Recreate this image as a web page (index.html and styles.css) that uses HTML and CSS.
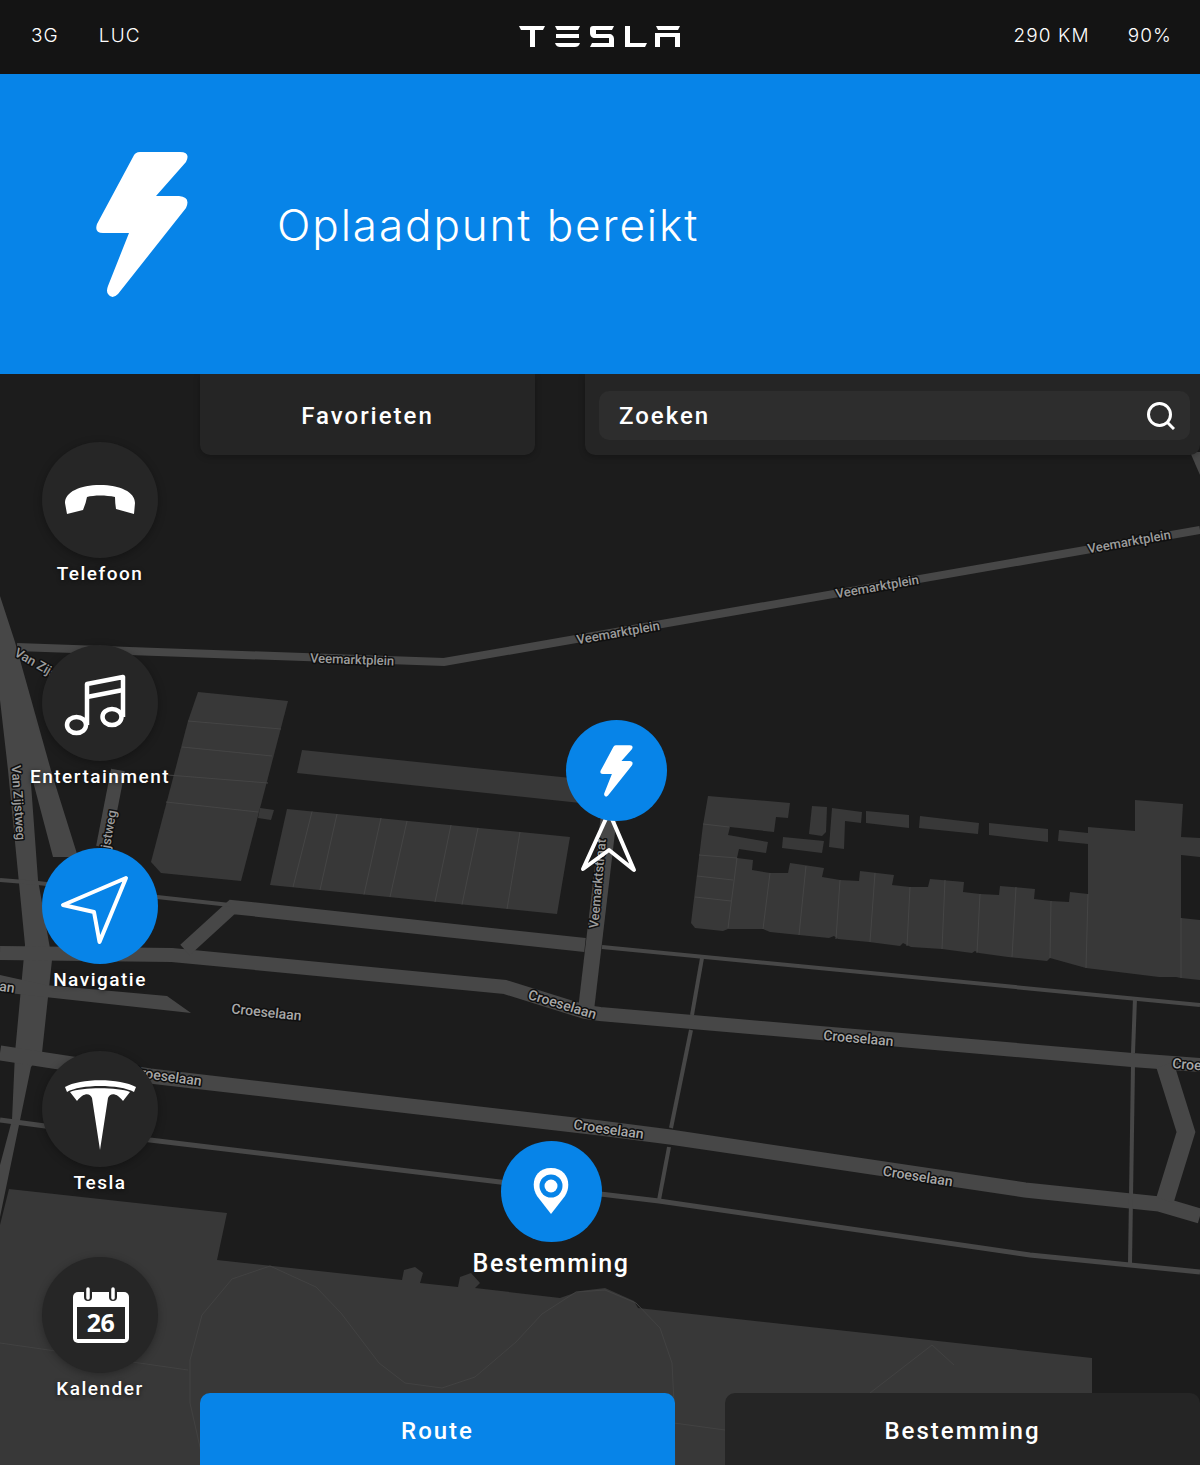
FILE: index.html
```html
<!DOCTYPE html>
<html lang="nl">
<head>
<meta charset="utf-8">
<title>Tesla navigatie</title>
<link rel="stylesheet" href="styles.css">
</head>
<body>
<svg class="defs" width="0" height="0" aria-hidden="true">
  <symbol id="bolt" viewBox="96 151 92 147">
    <path d="M140 152H180Q191 152 186 162L156 196H179Q191 197 186 208L118 294Q112 300 108 294Q106 291 108 286L129 233H103Q94 233 97 224L133 157Q135 152 140 152Z"/>
  </symbol>
</svg>
<div class="screen">
  <header class="topbar">
    <div class="status">
      <span>3G</span>
      <span>LUC</span>
    </div>
    <svg class="logo" viewBox="519 26 161 21" aria-label="Tesla">
      <path d="M519 26H545L543 30H535V47H530V30H521Z"/>
      <path d="M555 26H580L578 30H557ZM556 34H579V38H556ZM555 43H580C579 46 577 47 575 47H560C558 47 556 46 555 43Z"/>
      <path d="M593 26H614L612 30H596V34H609C612 34 614 36 614 39V47H590L592 43H609V38H595C592 38 590 36 590 33V29C590 27 591 26 593 26Z"/>
      <path d="M625 26H630V43H647L645 47H625Z"/>
      <path d="M656 26H680L678 30H658ZM655 33H680V47H675V37H660V47H655Z"/>
    </svg>
    <div class="status status-right">
      <span>290 KM</span>
      <span>90%</span>
    </div>
  </header>

  <section class="banner">
    <svg class="banner-bolt"><use href="#bolt"/></svg>
    <h1 class="banner-title">Oplaadpunt bereikt</h1>
  </section>

  <main class="map-area">
    <svg class="map" viewBox="0 374 1200 1091" preserveAspectRatio="none">
      <!-- park -->
      <path class="block" d="M9 1189L227 1213L217 1260L402 1280L404 1270L415 1267L423 1273L420 1283L458 1287L460 1277L471 1273L480 1283L475 1288L560 1298L580 1291L605 1288L634 1301L638 1308L1092 1358V1465H0V1225Z"/>
      <g class="park-line">
        <polyline points="203,1465 200,1447 190,1403 190,1360 202,1315 232,1279 270,1266 316,1287 341,1313 379,1363 405,1383 442,1388 475,1377 516,1342 542,1314 576,1292 605,1290 636,1303 660,1328 672,1363 674,1403 675,1465"/>
        <polyline points="0,1343 188,1370"/>
        <polyline points="674,1423 725,1430"/>
        <polyline points="870,1393 932,1345 954,1365"/>
      </g>
      <!-- roads -->
      <g class="road">
        <polygon class="road-fill" points="-2,590 15,642 52,774 78,857 53,857 30,770 38,880 52,960 42,1053 31,1067 0,1217 0,1165 12,1120 15,1053 25,945 8,770 0,700"/>
        <polygon class="road-fill" points="0,975 45,985 167,996 191,1013 45,997 0,992"/>
        <polygon class="road-fill" points="1190,452 1200,452 1200,475"/>
        <polyline class="w14" points="0,953 172,955 505,987 585,1012 600,1014 1132,1060 1200,1065"/>
        <polyline class="w15" points="0,1053 150,1076 600,1128 670,1137 1025,1190 1159,1204 1200,1216"/>
        <polyline class="w14" points="185,950 232,907 585,945"/>
        <polyline class="w16" points="609,815 586,1010"/>
        <polyline class="w14" points="118,770 103,847"/>
        <polyline class="w18" points="1165,1065 1186,1132 1165,1200"/>
        <polyline class="w8" points="17,647 444,662 1200,530"/>
        <polyline class="w4" points="0,880 38,883 157,897 230,905"/>
        <polyline class="w5" points="0,1120 150,1140 500,1182 659,1201 1030,1255 1200,1272"/>
        <polyline class="w4" points="602,947 1200,1005"/>
        <polyline class="w4" points="702,958 692,1015"/>
        <polyline class="w4" points="691,1030 671,1128"/>
        <polyline class="w4" points="669,1147 659,1200"/>
        <polyline class="w4" points="1135,998 1133,1053"/>
        <polyline class="w4" points="1133,1065 1130,1263"/>
      </g>
      <!-- buildings -->
      <path class="block" d="M198 692L288 701L241 881L161 873L151 862L188 721Z"/>
      <path class="block" d="M302 750L590 780V804L297 773Z"/>
      <path class="block" d="M260 808L274 810L271 820L258 818Z"/>
      <path class="block" d="M287 809L570 837L557 914L270 885Z"/>
      <path class="block" d="M708 796L790 803L788 818L776 817L774 832L730 827L728 835L768 842L766 853L739 849L737 858L753 860L752 870L770 873L788 873L790 863L824 868L822 877L840 880L859 881L860 871L894 875L892 885L910 887L928 887L930 879L964 882L963 892L980 894L999 895L1000 886L1035 889L1034 899L1051 901L1069 902L1070 892L1088 894V827L1135 831V800L1183 804L1181 837L1200 838V857L1181 855V918L1200 920V980L1181 978L1176 977H1159L1086 968L1050 958L1047 961L1008 957L979 953L975 951L972 953L942 949L911 947L903 943L900 946L869 942L838 939L834 936L829 938L799 935L770 932L763 929H728L723 931L695 928L691 923L703 825Z"/>
      <path class="block" d="M812 806L827 807L826 832L822 836L809 834Z"/>
      <path class="block" d="M832 808L862 812L861 823L845 821L844 849L829 847Z"/>
      <path class="block" d="M866 811L909 815V828L866 823Z"/>
      <path class="block" d="M920 816L979 823L978 834L919 828Z"/>
      <path class="block" d="M989 823L1048 829V842L989 835Z"/>
      <path class="block" d="M1059 830L1088 833V844L1058 841Z"/>
      <path class="block" d="M783 837L824 841L822 853L782 848Z"/>
      <g class="divider">
        <line x1="188" y1="721" x2="281" y2="729"/><line x1="182" y1="747" x2="272" y2="756"/>
        <line x1="168" y1="775" x2="268" y2="783"/><line x1="166" y1="802" x2="258" y2="812"/>
        <line x1="312" y1="811.5" x2="293" y2="887"/><line x1="337" y1="814" x2="320" y2="890"/>
        <line x1="381" y1="818" x2="364" y2="894.5"/><line x1="407" y1="821" x2="390" y2="897"/>
        <line x1="451" y1="825" x2="435" y2="902"/><line x1="478" y1="828" x2="462" y2="904.5"/>
        <line x1="520" y1="832" x2="507" y2="909"/>
        <line x1="728" y1="928" x2="737" y2="858"/><line x1="763" y1="929" x2="770" y2="873"/>
        <line x1="799" y1="935" x2="806" y2="866"/><line x1="836" y1="939" x2="840" y2="880"/>
        <line x1="870" y1="942" x2="875" y2="873"/><line x1="907" y1="946" x2="910" y2="887"/>
        <line x1="942" y1="949" x2="945" y2="880"/><line x1="977" y1="953" x2="980" y2="894"/>
        <line x1="1012" y1="957" x2="1016" y2="887"/><line x1="1050" y1="958" x2="1051" y2="901"/>
        <line x1="1086" y1="968" x2="1088" y2="894"/><line x1="1181" y1="918" x2="1181" y2="978"/>
        <line x1="703" y1="824" x2="729" y2="827"/><line x1="699" y1="855" x2="737" y2="858"/>
        <line x1="697" y1="876" x2="733" y2="880"/><line x1="695" y1="897" x2="731" y2="901"/>
      </g>
      <!-- street labels -->
      <g class="street">
        <text transform="translate(352 664) rotate(2)">Veemarktplein</text>
        <text transform="translate(619 637) rotate(-10)">Veemarktplein</text>
        <text transform="translate(878 591) rotate(-10)">Veemarktplein</text>
        <text transform="translate(1130 546) rotate(-10)">Veemarktplein</text>
        <text transform="translate(46 674) rotate(30)">Van Zijstweg</text>
        <text transform="translate(14 803) rotate(86)">Van Zijstweg</text>
        <text transform="translate(110 848) rotate(-80)">Van Zijstweg</text>
        <text transform="translate(602 884) rotate(-85)">Veemarktstraat</text>
        <text class="street-large" transform="translate(-21 988) rotate(8)">Croeselaan</text>
        <text class="street-large" transform="translate(266 1017) rotate(6)">Croeselaan</text>
        <text class="street-large" transform="translate(561 1009) rotate(17)">Croeselaan</text>
        <text class="street-large" transform="translate(858 1043) rotate(5)">Croeselaan</text>
        <text class="street-large" transform="translate(166 1081) rotate(8)">Croeselaan</text>
        <text class="street-large" transform="translate(608 1134) rotate(8)">Croeselaan</text>
        <text class="street-large" transform="translate(917 1181) rotate(9)">Croeselaan</text>
        <text class="street-large" transform="translate(1207 1071) rotate(5)">Croeselaan</text>
      </g>
      <!-- position arrow -->
      <path class="arrow" d="M609 812L634 870L609 850L583 869Z"/>
    </svg>

    <div class="tabs tabs-top">
      <div class="tab tab-favorites">Favorieten</div>
      <div class="tab tab-search">
        <div class="search-field">
          <span>Zoeken</span>
          <svg class="search-icon" viewBox="0 0 28 28"><circle cx="12.5" cy="12.5" r="11"/><line x1="20.5" y1="20.5" x2="27" y2="27"/></svg>
        </div>
      </div>
    </div>

    <nav class="apps">
      <div class="app">
        <div class="app-circle">
          <svg class="app-icon" viewBox="0 0 116 116"><path class="solid" d="M23 61C23 50 38 43 58 43C78 43 93 50 93 61L92 72L74 67Q73 61 73 55C64 53 52 53 45 55Q44 61 41 68L25 72Z"/></svg>
        </div>
        <span class="app-label">Telefoon</span>
      </div>
      <div class="app">
        <div class="app-circle">
          <svg class="app-icon" viewBox="0 0 116 116"><g class="line line-music"><ellipse cx="34.500" cy="80" rx="9.500" ry="8"/><ellipse cx="70" cy="72" rx="9.500" ry="8"/><path d="M45 80V39L81 32V72"/><path d="M45 52L81 45"/></g></svg>
        </div>
        <span class="app-label">Entertainment</span>
      </div>
      <div class="app">
        <div class="app-circle app-circle-active">
          <svg class="app-icon" viewBox="0 0 116 116"><path class="line" d="M84 30L21 57L52 64L57.500 94Z"/></svg>
        </div>
        <span class="app-label">Navigatie</span>
      </div>
      <div class="app">
        <div class="app-circle">
          <svg class="app-icon" viewBox="0 0 116 116"><path class="solid" d="M23 36C38 27 78 27 94 36L92 41C78 33 38 33 25 41Z"/><path class="solid" d="M58 99L50 47C48 42 42 41 35 50L28 41C40 36 76 36 88 41L81 50C74 41 68 42 66 47Z"/></svg>
        </div>
        <span class="app-label">Tesla</span>
      </div>
      <div class="app app-last">
        <div class="app-circle">
          <svg class="app-icon" viewBox="0 0 116 116">
            <rect class="solid" x="31" y="35" width="56" height="51" rx="5"/>
            <rect class="cut" x="35" y="50" width="48" height="32"/>
            <rect class="cut" x="42" y="30" width="8" height="14" rx="4"/>
            <rect class="cut" x="67" y="30" width="8" height="14" rx="4"/>
            <line class="ring" x1="46" y1="32" x2="46" y2="41"/>
            <line class="ring" x1="71" y1="32" x2="71" y2="41"/>
            <text class="cal-day" x="58.500" y="75">26</text>
          </svg>
        </div>
        <span class="app-label">Kalender</span>
      </div>
    </nav>

    <div class="pin pin-charge">
      <div class="pin-circle">
        <svg class="pin-bolt"><use href="#bolt"/></svg>
      </div>
    </div>
    <div class="pin pin-destination">
      <div class="pin-circle">
        <svg class="pin-marker" viewBox="0 0 36 46"><path class="solid" d="M18 46L4 28C-3 17 1 0 18 0C35 0 39 17 32 28Z"/><circle class="pin-hole" cx="18" cy="18" r="11.500"/><circle class="solid" cx="18" cy="18" r="6.500"/></svg>
      </div>
      <span class="pin-label">Bestemming</span>
    </div>

    <div class="tabs tabs-bottom">
      <div class="tab tab-route">Route</div>
      <div class="tab tab-destination">Bestemming</div>
    </div>
  </main>
</div>
</body>
</html>
```
FILE: styles.css
```css
* { box-sizing: border-box; }
html, body { margin: 0; padding: 0; background: #1c1c1c; }
body { font-family: "Roboto", "Liberation Sans", sans-serif; color: #fff; }
.defs { position: absolute; }

.screen { width: 1200px; height: 1465px; display: flex; flex-direction: column; overflow: hidden; }

/* top bar */
.topbar {
  height: 74px; flex: none; background: #141414;
  display: flex; align-items: center; justify-content: space-between;
  padding: 0 28px 4px 31px; position: relative;
}
.status { display: flex; gap: 40px; font-family: "Inter", sans-serif; font-weight: 300; font-size: 19px; letter-spacing: 1.1px; }
.status-right { gap: 38px; }
.logo { position: absolute; left: 519px; top: 26px; width: 161px; height: 21px; fill: #fff; }

/* banner */
.banner {
  height: 300px; flex: none; background: #0784e8;
  display: flex; align-items: center; padding-left: 96px; gap: 89px;
}
.banner-bolt { width: 92px; height: 147px; fill: #fff; flex: none; }
.banner-title {
  margin: 1px 0 0; font-family: "Inter", sans-serif; font-weight: 300; font-size: 44px;
  letter-spacing: 1.9px; line-height: 1;
}

/* map */
.map-area { flex: 1; position: relative; overflow: hidden; background: #1c1c1c; }
.map { position: absolute; left: 0; top: 0; width: 1200px; height: 1091px; }
.block { fill: #383838; }
.park-line polyline { fill: none; stroke: #424242; stroke-width: 1; }
.road polyline { fill: none; stroke: #474747; }
.road-fill { fill: #474747; }
.w4 { stroke-width: 4; }
.w5 { stroke-width: 5; }
.w8 { stroke-width: 8; }
.w14 { stroke-width: 14; }
.w15 { stroke-width: 15; }
.w16 { stroke-width: 16; }
.w18 { stroke-width: 18; }
.divider line { stroke: #454545; stroke-width: 1; }
.street text {
  font-family: "Roboto", sans-serif; font-size: 13px; font-weight: 500; text-anchor: middle;
  fill: #9c9c9c; stroke: #0f0f0f; stroke-width: 3px; paint-order: stroke; stroke-linejoin: round;
}
.street .street-large { font-size: 14px; fill: #a8a8a8; }
.arrow { fill: none; stroke: #fff; stroke-width: 4; stroke-linejoin: round; }

/* tabs */
.tabs { position: absolute; left: 200px; right: 0; display: flex; gap: 50px; }
.tabs-top { top: 0; height: 81px; }
.tabs-bottom { bottom: 0; height: 72px; }
.tab {
  background: #252525; display: flex; align-items: center; justify-content: center;
  font-size: 24px; font-weight: 500; letter-spacing: 2px;
}
.tabs-top .tab { border-radius: 0 0 10px 10px; box-shadow: 0 2px 6px rgba(0,0,0,.25); }
.tabs-bottom .tab { border-radius: 10px 10px 0 0; width: 475px; padding-top: 4px; }
.tab-favorites { width: 335px; padding-top: 2px; }
.tab-search { flex: 1; padding: 17px 10px 15px 14px; justify-content: stretch; }
.search-field {
  flex: 1; height: 49px; background: #2d2d2d; border-radius: 10px;
  display: flex; align-items: center; justify-content: space-between; padding: 0 15px 0 20px;
}
.search-icon { width: 28px; height: 28px; fill: none; stroke: #fff; stroke-width: 3; }
.tab-route { background: #0784e8; }

/* app column */
.apps { position: absolute; left: 42px; top: 68px; width: 116px; display: flex; flex-direction: column; }
.app { height: 203px; display: flex; flex-direction: column; align-items: center; }
.app-last { margin-top: 3px; }
.app-circle {
  width: 116px; height: 116px; flex: none; border-radius: 50%; background: #262626;
  box-shadow: 0 2px 8px rgba(0,0,0,.3);
}
.app-circle-active { background: #0784e8; box-shadow: none; }
.app-icon { display: block; width: 116px; height: 116px; }
.solid { fill: #fff; }
.line { fill: none; stroke: #fff; stroke-width: 4; stroke-linejoin: round; }
.line-music { stroke-width: 4.5; }
.cut { fill: #262626; }
.ring { stroke: #fff; stroke-width: 3.5; stroke-linecap: round; }
.cal-day { font-family: "Open Sans", sans-serif; font-weight: 700; font-size: 25px; text-anchor: middle; fill: #fff; letter-spacing: -.5px; }
.app-label {
  margin-top: 4px; font-size: 19px; line-height: 24px; font-weight: 500; letter-spacing: 1.5px;
  white-space: nowrap; text-shadow: 0 1px 4px rgba(0,0,0,.6);
}

/* map pins */
.pin { position: absolute; display: flex; flex-direction: column; align-items: center; width: 200px; }
.pin-charge { left: 516px; top: 346px; }
.pin-destination { left: 451px; top: 767px; }
.pin-circle {
  width: 101px; height: 101px; border-radius: 50%; background: #0784e8;
  display: flex; align-items: center; justify-content: center;
}
.pin-bolt { width: 33px; height: 52px; fill: #fff; }
.pin-marker { width: 36px; height: 46px; margin-bottom: 1px; }
.pin-hole { fill: #0784e8; }
.pin-label { margin-top: 7px; font-size: 25px; line-height: 30px; font-weight: 500; letter-spacing: 1.5px; }
```
